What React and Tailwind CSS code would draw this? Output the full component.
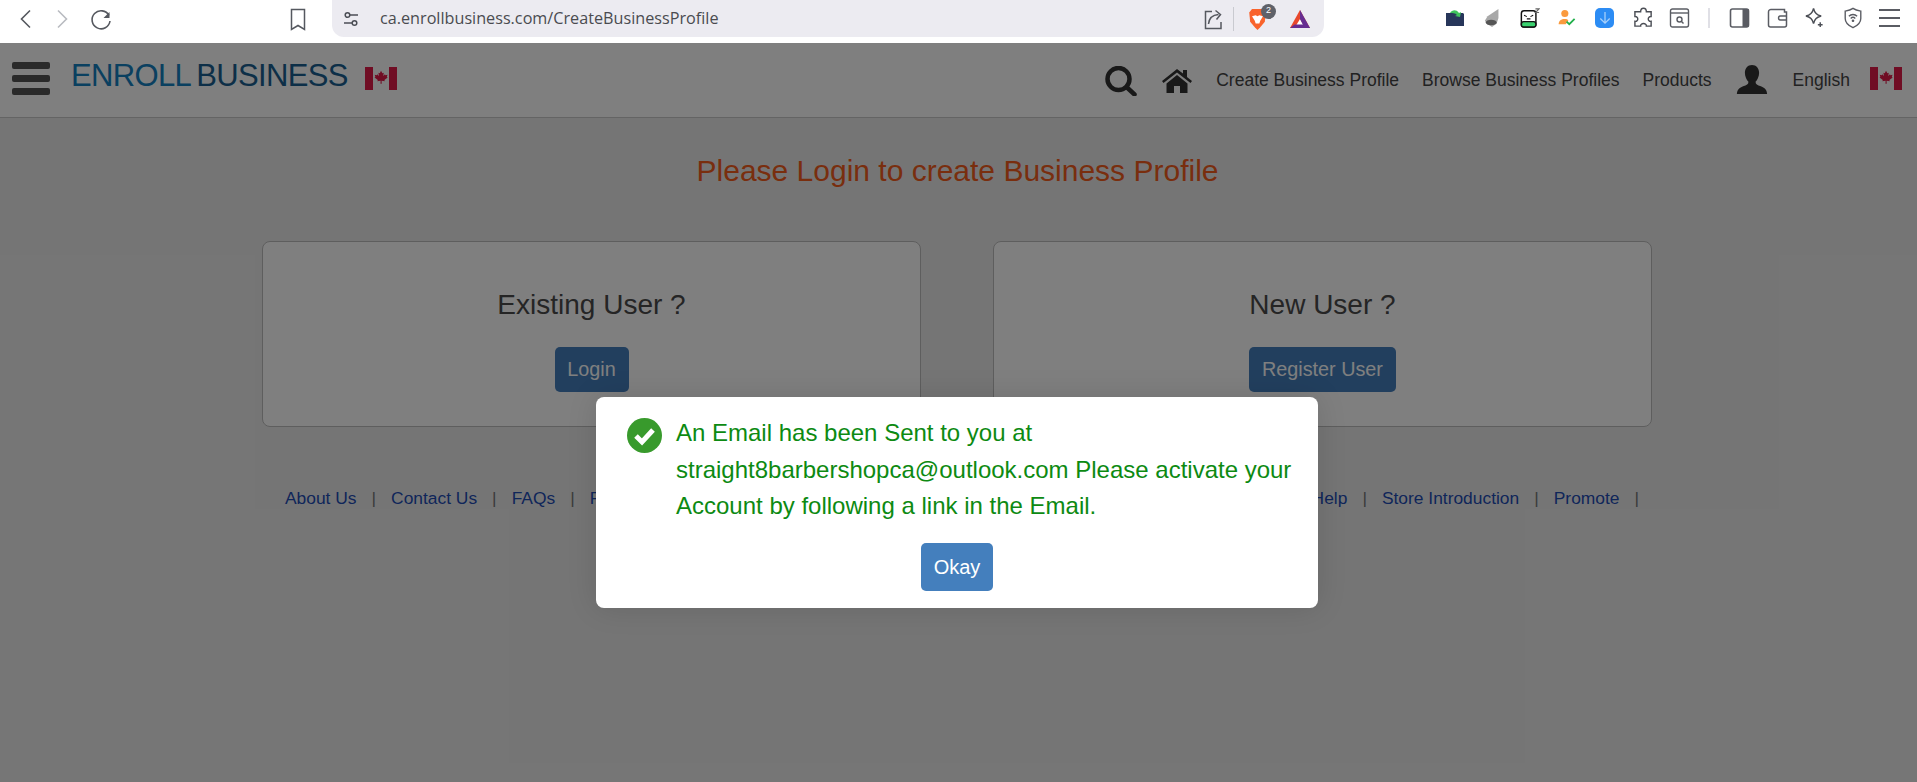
import React from "react";

const F = "font-['Liberation_Sans',Arial,sans-serif]";

function Flag() {
  return (
    <svg width="32" height="23" viewBox="0 0 32 24" preserveAspectRatio="none" className="block shrink-0">
      <rect width="32" height="24" fill="#fff" />
      <rect width="8" height="24" fill="#e01a48" />
      <rect x="24" width="8" height="24" fill="#e01a48" />
      <path
        d="M16 4l1.400 2.600 1.400-.7-.6 3.500 1.800-1.900.4 1 2.100-.4-.7 2.300.9.5-3.300 2.700.4 1.200-3.200-.4.1 3h-1.200l.1-3-3.200.4.4-1.200-3.300-2.700.9-.5-.7-2.300 2.100.4.4-1 1.800 1.900-.6-3.500 1.400.7z"
        fill="#e01a48"
      />
    </svg>
  );
}

function BrowserBar() {
  return (
    <div className="flex h-[43px] items-start bg-white">
      <div className="flex h-[37px] w-[332px] shrink-0 items-center text-[#5f6368]">
        <svg width="18" height="24" viewBox="0 0 18 24" className="ml-[16px]" fill="none" stroke="#55585f" strokeWidth="1.600">
          <path d="M14 3.500 5.500 12l8.500 8.500" />
        </svg>
        <svg width="18" height="24" viewBox="0 0 18 24" className="ml-[20px]" fill="none" stroke="#b9bbc0" strokeWidth="1.600">
          <path d="M4 3.500 12.500 12 4 20.500" />
        </svg>
        <svg width="24" height="24" viewBox="0 0 24 24" className="ml-[17px]" fill="none" stroke="#55585f" strokeWidth="1.600">
          <path d="M20 8.500A9 9 0 1 0 21 14" />
          <path d="M20.500 5v6h-6" fill="#55585f" stroke="none" />
        </svg>
        <svg width="18" height="24" viewBox="0 0 18 24" className="ml-[176px]" fill="none" stroke="#55585f" strokeWidth="1.500">
          <path d="M2.500 2.500h13v20L9 18.500l-6.500 4z" />
        </svg>
      </div>
      <div className={`flex h-[37px] w-[992px] shrink-0 items-center rounded-b-[12px] bg-[#ecebf1] ${F}`}>
        <svg width="18" height="18" viewBox="0 0 18 18" className="ml-[10px]" fill="none" stroke="#4b4e55" strokeWidth="1.500">
          <circle cx="5.500" cy="5" r="2.300" />
          <path d="M8 5h8M2 13h8" />
          <circle cx="12.500" cy="13" r="2.300" />
        </svg>
        <span className="mb-[1px] ml-[20px] font-['Open_Sans',sans-serif] text-[16.200px] text-[#4a4b50]">ca.enrollbusiness.com/CreateBusinessProfile</span>
        <div className="ml-auto flex items-center">
          <svg width="20" height="22" viewBox="0 0 20 22" fill="none" stroke="#55585f" strokeWidth="1.500">
            <path d="M8 3.500H1.500v17h15.500V14" />
            <path d="M4.500 16c.5-6 4-9 10-9.500M11.500 2.500l5 4-4 5" />
          </svg>
          <div className="ml-[9px] h-[24px] w-px bg-[#c9cad0]" />
          <div className="relative ml-[14px] h-[28px] w-[28px]">
            <svg width="19" height="22" viewBox="0 0 20 24" className="absolute left-0 top-[3px]">
              <path d="M4 1h12l3 4-1 10-5 6-3 3-3-3-5-6L1 5z" fill="#f9632c" />
              <path d="M4 9l4-1 2 1 2-1 4 1-3 5-1 3h-4l-1-3z" fill="#fff" />
            </svg>
            <span className="absolute left-[13px] top-[-1px] flex h-[15px] w-[15px] items-center justify-center rounded-full bg-[#5f6169] text-[9px] text-white">2</span>
          </div>
          <svg width="22" height="20" viewBox="0 0 24 22" className="ml-[13px] mr-[13px]">
            <path d="M12 1 23 21H1z" fill="#e8472c" />
            <path d="M12 11 18 21H6z" fill="#fff" />
            <path d="M12 1 23 21H17L12 11z" fill="#662d91" />
            <path d="M1 21 6 17H18L23 21z" fill="#662d91" />
          </svg>
        </div>
      </div>
      <div className="flex h-[37px] flex-1 items-center pb-[2px]">
        <svg width="20" height="18" viewBox="0 0 20 18" className="ml-[121px] shrink-0">
          <path d="M1 4h17l1 1v12H1z" fill="#27365a" />
          <path d="M5 4c2-3 6-4 9 0l2-1-1 5-5-1 2-1c-2-2-4-2-7-2z" fill="#3fc25c" />
        </svg>
        <svg width="20" height="20" viewBox="0 0 22 22" className="ml-[18px] shrink-0">
          <path d="M17 1 5 9l-3 5 3 4 5 3 5-4 2-6z" fill="#a8a8a8" />
          <ellipse cx="9" cy="16" rx="6" ry="3" fill="#555" />
        </svg>
        <svg width="20" height="20" viewBox="0 0 22 22" className="ml-[17px] shrink-0">
          <rect x="1.500" y="3" width="16" height="18" rx="3" fill="#fff" stroke="#111" strokeWidth="1.600" />
          <rect x="1.500" y="15" width="16" height="6" rx="2.500" fill="#3bd16f" stroke="#111" strokeWidth="1.600" />
          <path d="M4.500 8l3 1.500M11.500 9.500l3-1.500M7.500 12h4" stroke="#111" strokeWidth="1.200" />
          <path d="M17 1h4l-4 4h4" fill="none" stroke="#666" strokeWidth="1.200" />
        </svg>
        <svg width="19" height="16" viewBox="0 0 20 18" className="ml-[18px] shrink-0">
          <circle cx="7" cy="4" r="4" fill="#fa9a3e" />
          <path d="M0 16c0-4 3-6 7-6 2 0 3 .5 4 1.500L8 16z" fill="#fa9a3e" />
          <path d="M9 13l3 3 6-6" fill="none" stroke="#22b04c" strokeWidth="2" />
        </svg>
        <div className="ml-[18px] flex h-[20px] w-[19px] shrink-0 items-center justify-center rounded-[5px] bg-[#2c8cf4]">
          <svg width="12" height="14" viewBox="0 0 14 16" fill="none" stroke="#a7d0fb" strokeWidth="1.500">
            <path d="M7 1v13M1.500 8.500 7 14l5.500-5.500" />
          </svg>
        </div>
        <svg width="21" height="21" viewBox="0 0 22 22" className="ml-[19px] shrink-0" fill="none" stroke="#4b4e55" strokeWidth="1.500">
          <path d="M8 5c0-5 6-5 6 0h5v5c-4-.5-4 5.500 0 5v5h-5c.5-3.500-6.500-3.500-6 0H2v-5c4 .5 4-5.500 0-5V5z" />
        </svg>
        <svg width="21" height="20" viewBox="0 0 20 20" className="ml-[15px] shrink-0" fill="none" stroke="#5a5c63" strokeWidth="1.400">
          <rect x="1" y="1" width="18" height="18" rx="2" />
          <path d="M1 5h18" />
          <circle cx="10" cy="11.500" r="2.500" />
          <path d="M12 13.500l2 2" />
        </svg>
        <div className="ml-[18px] h-[20px] w-[2px] shrink-0 bg-[#e0e0e6]" />
        <svg width="21" height="20" viewBox="0 0 20 20" className="ml-[19px] shrink-0">
          <rect x="1" y="1" width="18" height="18" rx="2" fill="none" stroke="#5a5c63" strokeWidth="1.600" />
          <rect x="13" y="1" width="6" height="18" fill="#5a5c63" />
        </svg>
        <svg width="21" height="20" viewBox="0 0 20 20" className="ml-[17px] shrink-0" fill="none" stroke="#5a5c63" strokeWidth="1.500">
          <path d="M17 4V1.500H4A2.500 2.500 0 0 0 1 4v13a2 2 0 0 0 2 2h14a2 2 0 0 0 2-2V4z" />
          <path d="M19 8h-6a2 2 0 0 0 0 4h6" />
        </svg>
        <svg width="21" height="21" viewBox="0 0 22 22" className="ml-[16px] shrink-0" fill="none" stroke="#4b4e55" strokeWidth="1.500">
          <path d="M10 1.500c1 5 3 7 8 8-5 1-7 3-8 8-1-5-3-7-8-8 5-1 7-3 8-8z" />
          <path d="M17 16v5M14.500 18.500h5" />
        </svg>
        <svg width="20" height="22" viewBox="0 0 20 24" className="ml-[18px] shrink-0" fill="none" stroke="#5a5c63" strokeWidth="1.500">
          <path d="M10 1.500c2 1.500 5 2.500 8.500 3v8c0 5-4 8-8.500 10-4.500-2-8.500-5-8.500-10v-8c3.500-.5 6.500-1.500 8.500-3z" />
          <path d="M5.500 10c2.500-2.500 6.500-2.500 9 0M7.500 12.500c1.500-1.500 3.500-1.500 5 0" />
          <circle cx="10" cy="15" r=".7" fill="#5a5c63" />
        </svg>
        <div className="ml-[16px] flex w-[21px] shrink-0 flex-col gap-[6px]">
          <div className="h-[2px] bg-[#5a5c63]" />
          <div className="h-[2px] bg-[#5a5c63]" />
          <div className="h-[2px] bg-[#5a5c63]" />
        </div>
      </div>
    </div>
  );
}

function NavBar() {
  return (
    <div className={`flex h-[75px] items-center border-b border-[#c8c8c8] bg-white ${F}`}>
      <div className="mb-[3px] ml-[12px] flex w-[38px] flex-col gap-[6px]">
        <div className="h-[7px] rounded-[2px] bg-[#555]" />
        <div className="h-[7px] rounded-[2px] bg-[#555]" />
        <div className="h-[7px] rounded-[2px] bg-[#555]" />
      </div>
      <div className="mb-[10px] ml-[21px] flex text-[31px] leading-none tracking-[-0.65px]">
        <span className="text-[#1580c0]">ENROLL</span>
        <span className="ml-[5px] text-[#1a5f90]">BUSINESS</span>
      </div>
      <div className="mb-[3px] ml-[17px]"><Flag /></div>
      <div className="ml-auto flex items-center text-[17.500px] text-[#444]">
        <svg width="32" height="30" viewBox="0 0 32 30" fill="none" stroke="#333" className="mt-[1px]">
          <circle cx="13.500" cy="13" r="11" strokeWidth="4.500" />
          <path d="M21.500 21l8 7.500" strokeWidth="4.500" strokeLinecap="round" />
        </svg>
        <svg width="32" height="25" viewBox="0 0 32 25" className="ml-[24px]" fill="#333">
          <path d="M16 1 1 13l1.500 2L16 4.500 29.500 15l1.500-2-5-4V2h-4v3.500z" />
          <path d="M16 7 5.500 15.500V25H13v-7h6v7h7.500V15.500z" />
        </svg>
        <span className="ml-[23px]">Create Business Profile</span>
        <span className="ml-[23px]">Browse Business Profiles</span>
        <span className="ml-[23px]">Products</span>
        <svg width="32" height="30" viewBox="0 0 36 34" preserveAspectRatio="none" className="ml-[24px]" fill="#333">
          <path d="M18 0c5 0 8 4 8 9 0 4-2 8-4 10 0 3 2 4 6 5 5 2 7 5 7 9H1c0-4 2-7 7-9 4-1 6-2 6-5-2-2-4-6-4-10 0-5 3-9 8-9z" />
        </svg>
        <span className="ml-[25px]">English</span>
        <div className="mb-[3px] ml-[20px] mr-[15px]"><Flag /></div>
      </div>
    </div>
  );
}

function Card({ title, label, btnW }) {
  return (
    <div className="flex h-[186px] w-[659px] flex-col items-center rounded-[8px] border border-[#bcbcbc] bg-white pt-[48px]">
      <h3 className="text-[28px] leading-[30px] text-[#4a4a4a]">{title}</h3>
      <button className={`mt-[27px] h-[45px] rounded-[5px] bg-[#447fbd] text-[19.800px] text-white ${btnW}`}>{label}</button>
    </div>
  );
}

function FooterLink({ label }) {
  return (
    <>
      <span className="text-[#1e4cb4]">{label}</span>
      <span className="text-[#777]">|</span>
    </>
  );
}

function Page() {
  return (
    <div className={`min-h-[739px] bg-[#ebebeb] ${F}`}>
      <NavBar />
      <h1 className="mt-[34px] pr-[2px] text-center text-[30px] leading-[38px] text-[#f25c1c]">Please Login to create Business Profile</h1>
      <div className="mt-[51px] flex justify-center gap-[72px] pr-[3px]">
        <Card title="Existing User ?" label="Login" btnW="w-[74px]" />
        <Card title="New User ?" label="Register User" btnW="w-[147px]" />
      </div>
      <div className="mt-[61px] flex justify-between pl-[285px] pr-[278px] text-[17.400px] leading-[20px]">
        <div className="flex gap-[15px]">
          <FooterLink label="About Us" />
          <FooterLink label="Contact Us" />
          <FooterLink label="FAQs" />
          <FooterLink label="Pricing" />
        </div>
        <div className="flex gap-[15px]">
          <FooterLink label="Help" />
          <FooterLink label="Store Introduction" />
          <FooterLink label="Promote" />
        </div>
      </div>
    </div>
  );
}

export default function App() {
  return (
    <div className="relative h-[782px] w-[1917px] overflow-hidden bg-white">
      <BrowserBar />
      <Page />
      <div className="absolute inset-x-0 bottom-0 top-[43px] bg-black/50" />
      <div className={`absolute left-[596px] top-[397px] h-[211px] w-[722px] rounded-[8px] bg-white pl-[31px] pt-[18px] shadow-[0_0_30px_rgba(0,0,0,0.12)] ${F}`}>
        <div className="flex">
          <svg width="35" height="35" viewBox="0 0 35 35" className="mr-[14px] mt-[3px] shrink-0">
            <circle cx="17.500" cy="17.500" r="17.500" fill="#389a2c" />
            <path d="M9 18l6 6 11-12" fill="none" stroke="#fff" strokeWidth="5" />
          </svg>
          <p className="w-[640px] text-[24px] leading-[36.600px] text-[#0d8a12]">
            An Email has been Sent to you at straight8barbershopca@outlook.com Please activate your Account by following a link in the Email.
          </p>
        </div>
        <div className="mt-[18px] flex justify-center pr-[31px]">
          <button className="h-[48px] w-[72px] rounded-[5px] bg-[#447fbd] text-[20px] text-white">Okay</button>
        </div>
      </div>
    </div>
  );
}
